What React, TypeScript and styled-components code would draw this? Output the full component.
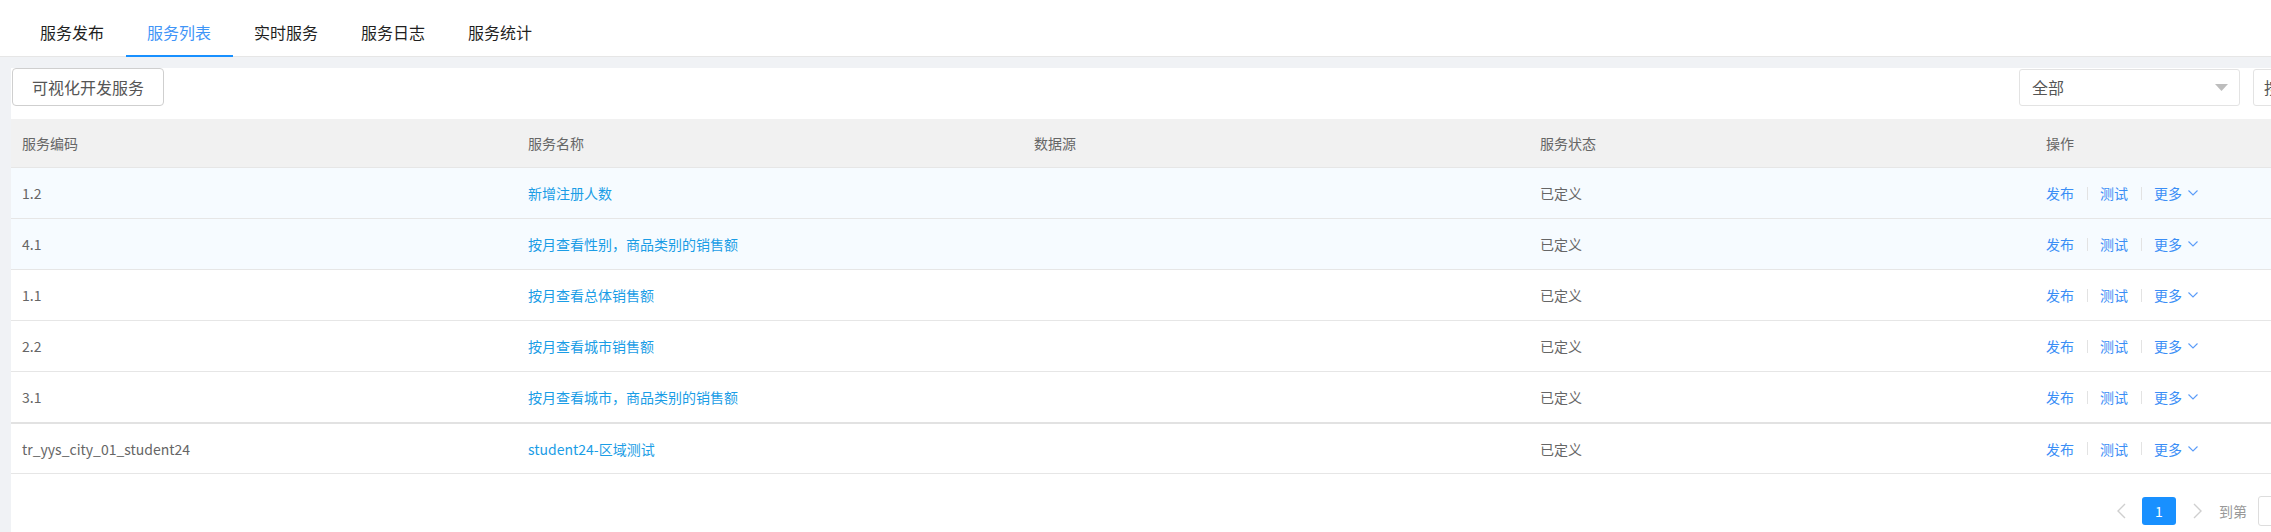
import React from "react";
import styled, { createGlobalStyle } from "styled-components";

const GlobalStyle = createGlobalStyle`
  html, body {
    margin: 0;
    padding: 0;
    overflow: hidden;
    background: #f0f2f5;
    font-family: "Noto Sans CJK SC", "Noto Sans", sans-serif;
  }
  * { box-sizing: border-box; }
`;

const Page = styled.div`
  width: 2600px;
  min-height: 532px;
  background: #f0f2f5;
`;

const TabBar = styled.nav`
  display: flex;
  height: 57px;
  padding-left: 18.5px;
  background: #fff;
  border-bottom: 1px solid #e6e6e6;
`;

const Tab = styled.div<{ $active?: boolean }>`
  display: flex;
  align-items: center;
  height: 57px;
  margin-bottom: -1px;
  padding: 9px 21.5px 0;
  font-size: 16px;
  color: ${(p) => (p.$active ? "#3f95f7" : "#1f1f1f")};
  border-bottom: 2px solid ${(p) => (p.$active ? "#1890ff" : "transparent")};
  cursor: pointer;
`;

const Main = styled.main`
  padding: 11px 0 0 11px;
`;

const Panel = styled.section`
  width: 2542px;
  min-height: 464px;
  background: #fff;
`;

const Toolbar = styled.div`
  display: flex;
  align-items: center;
  height: 38px;
  margin-bottom: 13px;
`;

const Button = styled.button`
  height: 38px;
  padding: 0 19px;
  margin-left: 1px;
  font-family: inherit;
  font-size: 16px;
  color: #555;
  background: #fff;
  border: 1px solid #cfcfcf;
  border-radius: 4px;
`;

const ToolRight = styled.div`
  display: flex;
  gap: 13px;
  margin-left: auto;
`;

const Select = styled.div`
  display: flex;
  align-items: center;
  justify-content: space-between;
  width: 221px;
  height: 37px;
  padding: 0 11px 0 12px;
  font-size: 16px;
  color: #555;
  border: 1px solid #e3e3e3;
  border-radius: 3px;
`;

const SearchBox = styled.div`
  display: flex;
  align-items: center;
  width: 300px;
  height: 37px;
  padding: 0 10px;
  font-size: 16px;
  color: #555;
  border: 1px solid #e3e3e3;
  border-radius: 3px;
`;

const Row = styled.div<{ $head?: boolean; $hl?: boolean; $thick?: boolean; $h?: number }>`
  display: grid;
  grid-template-columns: repeat(5, 506px);
  align-items: center;
  height: ${(p) => p.$h ?? 51}px;
  font-size: 14px;
  color: #666;
  background: ${(p) => (p.$head ? "#f1f1f1" : p.$hl ? "#f6fbff" : "#fff")};
  border-bottom: ${(p) => (p.$thick ? 2 : 1)}px solid
    ${(p) => (p.$thick ? "#e2e2e2" : "#e6e6e6")};
`;

const Cell = styled.div<{ $link?: boolean }>`
  padding-left: 11px;
  color: ${(p) => (p.$link ? "#1a9de6" : "inherit")};
  white-space: nowrap;
`;

const Actions = styled.div`
  display: flex;
  align-items: center;
  padding-left: 11px;
  color: #3a8ef6;
`;

const Sep = styled.span`
  width: 1px;
  height: 13px;
  margin: 0 12.5px;
  background: #e3e3e3;
`;

const More = styled.span`
  display: inline-flex;
  align-items: center;
  gap: 6px;
`;

const Pager = styled.div`
  display: flex;
  align-items: center;
  justify-content: flex-end;
  margin-top: 22px;
  padding-right: 163px;
  font-size: 14px;
  color: #999;
`;

const Arrow = styled.span`
  display: flex;
  align-items: center;
  justify-content: center;
  width: 24px;
  height: 28px;
`;

const PageNum = styled.span<{ $current?: boolean }>`
  display: flex;
  align-items: center;
  justify-content: center;
  width: 34px;
  height: 28px;
  margin: 0 9px;
  border-radius: 3px;
  background: ${(p) => (p.$current ? "#1890ff" : "#fff")};
  color: ${(p) => (p.$current ? "#fff" : "#666")};
`;

const JumpText = styled.span<{ $gap?: number }>`
  margin-left: ${(p) => p.$gap ?? 8}px;
`;

const JumpInput = styled.span`
  width: 46px;
  height: 30px;
  margin-left: 11px;
  border: 1px solid #ddd;
  border-radius: 3px;
`;

const JumpButton = styled.span`
  display: flex;
  align-items: center;
  justify-content: center;
  width: 56px;
  height: 30px;
  margin-left: 8px;
  color: #555;
  border: 1px solid #ddd;
  border-radius: 3px;
`;

const tabs = ["服务发布", "服务列表", "实时服务", "服务日志", "服务统计"];
const heads = ["服务编码", "服务名称", "数据源", "服务状态", "操作"];
const rows = [
  { code: "1.2", name: "新增注册人数" },
  { code: "4.1", name: "按月查看性别，商品类别的销售额" },
  { code: "1.1", name: "按月查看总体销售额" },
  { code: "2.2", name: "按月查看城市销售额" },
  { code: "3.1", name: "按月查看城市，商品类别的销售额" },
  { code: "tr_yys_city_01_student24", name: "student24-区域测试" },
];

const Caret = () => (
  <svg width="13" height="7" viewBox="0 0 13 7">
    <path d="M0 0h13L6.5 7z" fill="#bdbdbd" />
  </svg>
);

const Down = () => (
  <svg width="10" height="6" viewBox="0 0 10 6">
    <path d="M0.5 0.5L5 5l4.5-4.5" fill="none" stroke="#5a9cf8" strokeWidth="1.1" />
  </svg>
);

const Chevron = ({ dir }: { dir: "left" | "right" }) => (
  <svg width="9" height="16" viewBox="0 0 9 16">
    <path
      d={dir === "left" ? "M8 1L1 8l7 7" : "M1 1l7 7-7 7"}
      fill="none"
      stroke="#cfcfcf"
      strokeWidth="1.4"
    />
  </svg>
);

export default function App() {
  return (
    <Page>
      <GlobalStyle />
      <TabBar>
        {tabs.map((t, i) => (
          <Tab key={t} $active={i === 1}>
            {t}
          </Tab>
        ))}
      </TabBar>
      <Main>
        <Panel>
          <Toolbar>
            <Button>可视化开发服务</Button>
            <ToolRight>
              <Select>
                全部
                <Caret />
              </Select>
              <SearchBox>按服务名称搜索</SearchBox>
            </ToolRight>
          </Toolbar>

          <Row $head $h={49}>
            {heads.map((h) => (
              <Cell key={h}>{h}</Cell>
            ))}
          </Row>
          {rows.map((r, i) => (
            <Row
              key={r.code}
              $hl={i < 2}
              $thick={i === 4}
              $h={i === 4 ? 52 : i === 5 ? 50 : 51}
            >
              <Cell>{r.code}</Cell>
              <Cell $link>{r.name}</Cell>
              <Cell />
              <Cell>已定义</Cell>
              <Actions>
                <span>发布</span>
                <Sep />
                <span>测试</span>
                <Sep />
                <More>
                  更多
                  <Down />
                </More>
              </Actions>
            </Row>
          ))}

          <Pager>
            <Arrow>
              <Chevron dir="left" />
            </Arrow>
            <PageNum $current>1</PageNum>
            <Arrow>
              <Chevron dir="right" />
            </Arrow>
            <JumpText $gap={10}>到第</JumpText>
            <JumpInput />
            <JumpText>页</JumpText>
            <JumpButton>确定</JumpButton>
          </Pager>
        </Panel>
      </Main>
    </Page>
  );
}
